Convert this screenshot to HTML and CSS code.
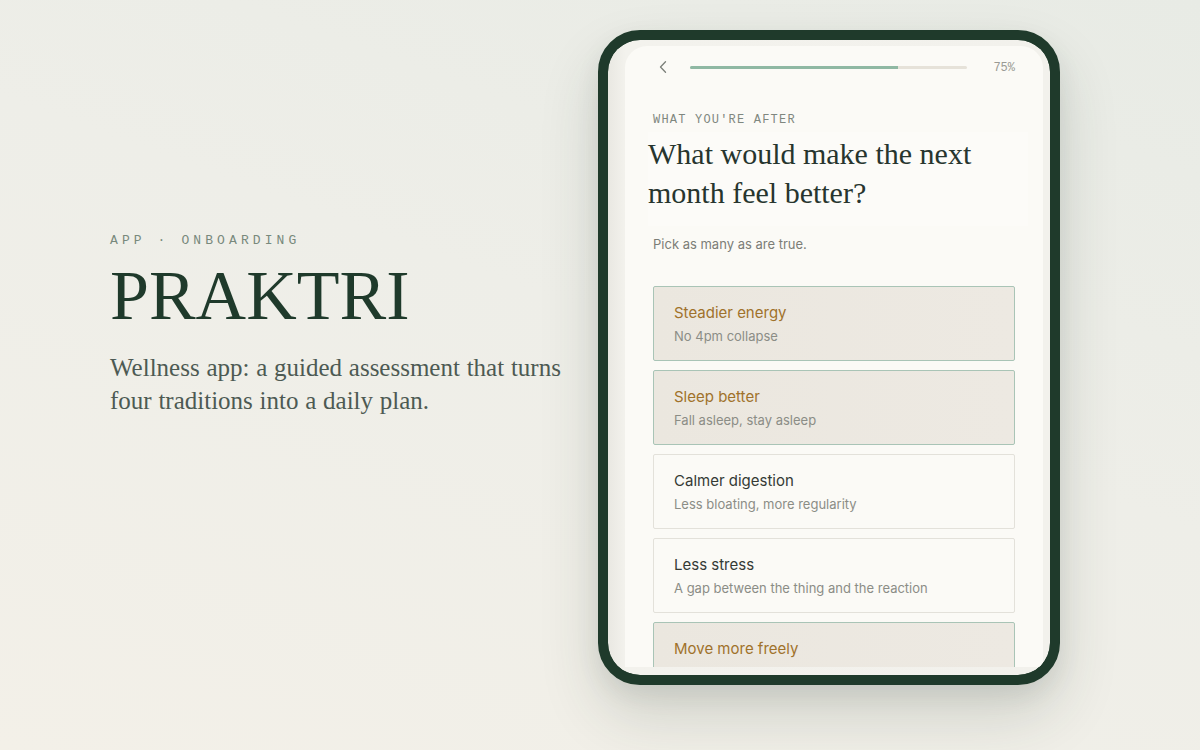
FILE: index.html
```html
<!DOCTYPE html>
<html lang="en">
<head>
<meta charset="utf-8">
<title>Praktri — Onboarding</title>
<link rel="stylesheet" href="styles.css">
</head>
<body>
<main class="stage">
  <section class="intro">
    <div class="eyebrow">APP · ONBOARDING</div>
    <h1 class="brand">PRAKTRI</h1>
    <p class="lede">Wellness app: a guided assessment that turns four traditions into a daily plan.</p>
  </section>

  <div class="device">
    <div class="screen">
      <div class="panel">
        <div class="topbar">
          <svg class="back" width="8" height="12" viewBox="0 0 8 12" aria-hidden="true"><path d="M6.5 0.8 L1.5 6 L6.5 11.2" fill="none" stroke="#7b7f79" stroke-width="1.3" stroke-linecap="round" stroke-linejoin="round"/></svg>
          <div class="progress"><div class="progress-fill" style="width:75%"></div></div>
          <span class="pct">75%</span>
        </div>

        <div class="kicker">WHAT YOU'RE AFTER</div>
        <h2 class="question">What would make the next month feel better?</h2>
        <p class="hint">Pick as many as are true.</p>

        <ul class="options">
          <li class="option selected"><span class="opt-title">Steadier energy</span><span class="opt-sub">No 4pm collapse</span></li>
          <li class="option selected"><span class="opt-title">Sleep better</span><span class="opt-sub">Fall asleep, stay asleep</span></li>
          <li class="option"><span class="opt-title">Calmer digestion</span><span class="opt-sub">Less bloating, more regularity</span></li>
          <li class="option"><span class="opt-title">Less stress</span><span class="opt-sub">A gap between the thing and the reaction</span></li>
          <li class="option selected"><span class="opt-title">Move more freely</span></li>
        </ul>
      </div>
    </div>
  </div>
</main>
</body>
</html>
```

FILE: styles.css
```css
* { box-sizing: border-box; }

html, body {
  margin: 0;
  height: 100%;
}

body {
  width: 1200px;
  height: 750px;
  overflow: hidden;
  background: linear-gradient(200deg, #e8ebe5 0%, #eeeee8 45%, #f3f0e8 100%);
  font-family: "Liberation Serif", serif;
}

.stage {
  display: flex;
  align-items: flex-start;
  height: 750px;
  padding-left: 110px;
}

.intro {
  width: 488px;
  padding-top: 233px;
}

.eyebrow {
  font-family: "Liberation Mono", "DejaVu Sans Mono", monospace;
  font-size: 13px;
  letter-spacing: 4.1px;
  color: #78897c;
  line-height: 16px;
}

.brand {
  margin: 12px 0 0;
  font-family: "Liberation Serif", serif;
  font-weight: 400;
  font-size: 70px;
  line-height: 70px;
  letter-spacing: 0;
  color: #1f3a2b;
}

.lede {
  margin: 20px 0 0;
  max-width: 470px;
  font-size: 25px;
  line-height: 33px;
  word-spacing: 0.5px;
  color: #4d5a53;
}

.device {
  margin-top: 30px;
  width: 462px;
  height: 655px;
  border: 10px solid #1f3a2b;
  border-radius: 42px;
  background: #1f3a2b;
  box-shadow: 0 30px 60px rgba(40, 55, 45, 0.16), 0 10px 24px rgba(40, 55, 45, 0.08);
  overflow: hidden;
}

.screen {
  width: 100%;
  height: 100%;
  border-radius: 32px;
  background: linear-gradient(90deg, #e9e8e2 0%, #f3f2ed 4%, #f2f1ec 100%);
  padding: 6px 7px 8px 17px;
  overflow: hidden;
}

.panel {
  height: 100%;
  background: #fbfaf6;
  border-radius: 22px 22px 0 0;
  overflow: hidden;
  padding: 14px 28px 0 28px;
  font-family: "Inter", "Noto Sans", sans-serif;
}

.topbar {
  display: flex;
  align-items: center;
  height: 14px;
}

.back {
  display: block;
  margin-left: 6px;
  flex: none;
}

.progress {
  margin-left: 23px;
  width: 277px;
  height: 3px;
  background: #e6e2d9;
  border-radius: 2px;
  overflow: hidden;
}

.progress-fill {
  height: 100%;
  background: #8fb8a3;
}

.pct {
  margin-left: auto;
  margin-top: 2px;
  font-family: "Liberation Mono", "DejaVu Sans Mono", monospace;
  font-size: 12px;
  color: #9a9a94;
}

.kicker {
  margin-top: 39px;
  font-family: "Liberation Mono", "DejaVu Sans Mono", monospace;
  font-size: 12px;
  letter-spacing: 1.2px;
  line-height: 14px;
  color: #7f877f;
}

.question {
  margin: 5px 0 0 -5px;
  padding: 2px 0 14px 0;
  width: 380px;
  background: #fcfbf8;
  font-family: "Liberation Serif", serif;
  font-weight: 400;
  font-size: 30px;
  line-height: 39px;
  color: #27352e;
}

.hint {
  margin: 10px 0 0;
  font-size: 13px;
  line-height: 16px;
  color: #7c7d77;
}

.options {
  list-style: none;
  margin: 34px 0 0;
  padding: 0;
  display: flex;
  flex-direction: column;
  gap: 9px;
}

.option {
  height: 75px;
  border: 1px solid #e3e1da;
  border-radius: 2px;
  background: #fbfaf6;
  padding: 17px 20px 0;
  display: flex;
  flex-direction: column;
  flex: none;
}

.option.selected {
  background: linear-gradient(90deg, #ebe7df 0%, #ede9e2 100%);
  border-color: #a9c4b6;
}

.opt-title {
  font-size: 15px;
  line-height: 18px;
  color: #353a35;
}

.option.selected .opt-title {
  color: #a0722b;
}

.opt-sub {
  margin-top: 6px;
  font-size: 13px;
  line-height: 16px;
  color: #8b8d86;
}
```
